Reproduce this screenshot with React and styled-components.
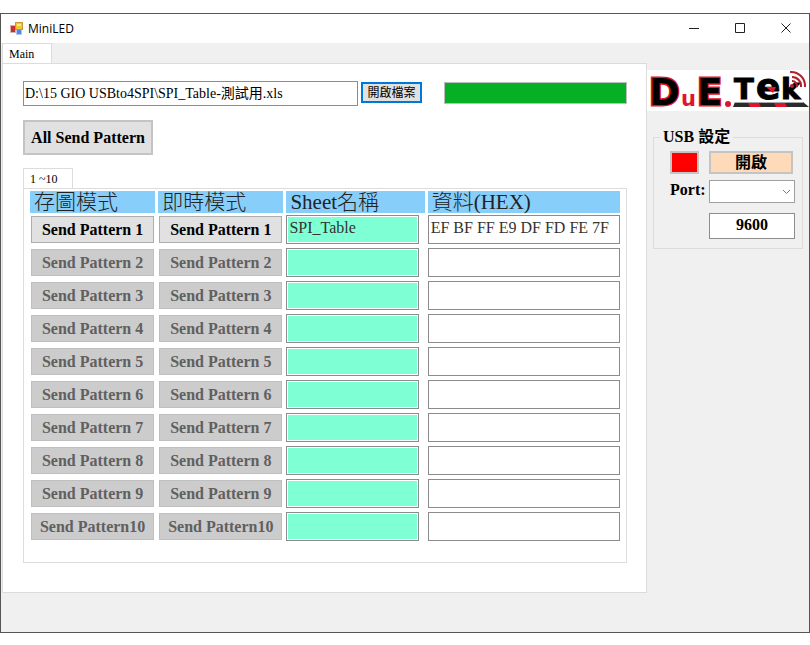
import React from "react";
import styled, { createGlobalStyle } from "styled-components";
import { useState } from "react";

const patterns = [
  { id: 1, label: "Send Pattern 1", sheet: "SPI_Table", data: "EF BF FF E9 DF FD FE 7F" },
  { id: 2, label: "Send Pattern 2", sheet: "", data: "" },
  { id: 3, label: "Send Pattern 3", sheet: "", data: "" },
  { id: 4, label: "Send Pattern 4", sheet: "", data: "" },
  { id: 5, label: "Send Pattern 5", sheet: "", data: "" },
  { id: 6, label: "Send Pattern 6", sheet: "", data: "" },
  { id: 7, label: "Send Pattern 7", sheet: "", data: "" },
  { id: 8, label: "Send Pattern 8", sheet: "", data: "" },
  { id: 9, label: "Send Pattern 9", sheet: "", data: "" },
  { id: 10, label: "Send Pattern10", sheet: "", data: "" },
];

function AppIcon() {
  return (
    <svg width="14" height="14" viewBox="0 0 14 14" aria-hidden="true">
      <rect x="0.5" y="3.5" width="5" height="7" fill="#c8312b" stroke="#d9b3b0" />
      <rect x="6.5" y="7.5" width="5" height="5" fill="#4f86e8" stroke="#b4c8ee" />
      <rect x="5.5" y="0.5" width="7" height="7" fill="#f5c52c" stroke="#c39a3a" />
      <rect x="7" y="2" width="4" height="2" fill="#fde58a" />
    </svg>
  );
}

function Logo() {
  return (
    <LogoSvg viewBox="0 0 162 41" role="img" aria-label="DuE.Tek">
      <g fontFamily="'DejaVu Sans', sans-serif" fontWeight="700">
        <g fontSize="37" stroke="#e0142c" strokeWidth="3" fill="#000" paintOrder="stroke">
          <text x="2" y="35">D</text>
          <text x="50" y="35">E</text>
        </g>
        <text x="34" y="36" fontSize="21" fill="#e0142c">u</text>
        <g fill="#000" stroke="#000">
          <text x="87" y="29" fontSize="29">T</text>
          <text x="109" y="29" fontSize="36">e</text>
          <text x="134" y="29" fontSize="29">k</text>
        </g>
      </g>
      <circle cx="81" cy="34" r="3" fill="#e0142c" />
      <path d="M119 17h10l-3 6z" fill="#e0142c" />
      <g fill="none" stroke="#b3202c" strokeWidth="2">
        <path d="M145 11a5 5 0 0 1 5 6" />
        <path d="M145 7a9 9 0 0 1 9 10" />
        <path d="M143 2a14 14 0 0 1 15 15" />
      </g>
      <circle cx="145" cy="16" r="2" fill="#b3202c" />
      <path d="M88 32h68l6 5H86z" fill="#2b2b2b" />
      <path d="M101 33h11l2 4h-11zM127 33h11l2 4h-11z" fill="#e0142c" />
      <path d="M88 32.5h68" stroke="#a8a8a8" />
    </LogoSvg>
  );
}

function App() {
  const [file, setFile] = useState("D:\\15 GIO USBto4SPI\\SPI_Table-測試用.xls");
  const [baud, setBaud] = useState("9600");

  return (
    <Window>
      <GlobalStyle />
      <TitleBar>
        <AppIcon />
        <WindowTitle>MiniLED</WindowTitle>
        <CaptionButton aria-label="Minimize">
          <svg width="11" height="11" viewBox="0 0 11 11">
            <path d="M0 5.5h10" />
          </svg>
        </CaptionButton>
        <CaptionButton aria-label="Maximize">
          <svg width="11" height="11" viewBox="0 0 11 11">
            <path d="M0.5 0.5h9v9h-9z" />
          </svg>
        </CaptionButton>
        <CaptionButton aria-label="Close">
          <svg width="11" height="11" viewBox="0 0 11 11">
            <path d="M0.5 0.5l9 9M9.5 0.5l-9 9" />
          </svg>
        </CaptionButton>
      </TitleBar>

      <Client>
        <Main>
          <Tab role="tab" aria-selected="true">Main</Tab>
          <MainPage>
            <FileRow>
              <PathInput
                aria-label="File"
                value={file}
                onChange={(e) => setFile(e.target.value)}
              />
              <OpenButton>開啟檔案</OpenButton>
              <Progress aria-label="Progress" value="100" max="100" />
            </FileRow>
            <SendAllButton>All Send Pattern</SendAllButton>

            <Tab role="tab" aria-selected="true">1 ~10</Tab>
            <PatternPage>
              <PatternTable>
                <thead>
                  <Row>
                    <HeadCell>存圖模式</HeadCell>
                    <HeadCell>即時模式</HeadCell>
                    <HeadCell>Sheet名稱</HeadCell>
                    <HeadCell>資料(HEX)</HeadCell>
                  </Row>
                </thead>
                <tbody>
                  {patterns.map((pattern) => (
                    <Row key={pattern.id}>
                      <ButtonCell>
                        <SendButton disabled={!pattern.data}>{pattern.label}</SendButton>
                      </ButtonCell>
                      <ButtonCell>
                        <SendButton disabled={!pattern.data}>{pattern.label}</SendButton>
                      </ButtonCell>
                      <SheetCell>
                        <CellInput
                          $color="#7fffd4"
                          aria-label={`Sheet名稱 ${pattern.id}`}
                          defaultValue={pattern.sheet}
                        />
                      </SheetCell>
                      <Cell>
                        <CellInput
                          $color="#ffffff"
                          aria-label={`資料(HEX) ${pattern.id}`}
                          defaultValue={pattern.data}
                        />
                      </Cell>
                    </Row>
                  ))}
                </tbody>
              </PatternTable>
            </PatternPage>
          </MainPage>
        </Main>

        <Side>
          <Logo />
          <UsbGroup>
            <legend>USB 設定</legend>
            <UsbGrid>
              <UsbButton $color="#ff0000" $width="29px" aria-label="USB status" />
              <UsbButton $color="#ffdab9" $width="84px">開啟</UsbButton>
              <PortLabel htmlFor="port">Port:</PortLabel>
              <SelectBox>
                <select id="port" />
                <svg width="9" height="6" viewBox="0 0 9 6" aria-hidden="true">
                  <path d="M1 1l3.5 3.5L8 1" fill="none" stroke="#777" />
                </svg>
              </SelectBox>
              <BaudInput
                aria-label="Baud rate"
                value={baud}
                onChange={(e) => setBaud(e.target.value)}
              />
            </UsbGrid>
          </UsbGroup>
        </Side>
      </Client>
    </Window>
  );
}

const GlobalStyle = createGlobalStyle`
  * {
    box-sizing: border-box;
  }

  body {
    margin: 0;
    padding: 13px 0 12px;
    background: #fff;
    font-family: "Liberation Serif", "Noto Sans CJK TC", serif;
    color: #000;
  }

  button, input, select {
    font-family: inherit;
    color: inherit;
    margin: 0;
    border-radius: 0;
  }
`;

const Window = styled.div`
  border: 1px solid #555;
  background: #f0f0f0;
`;

const TitleBar = styled.header`
  display: flex;
  align-items: center;
  height: 29px;
  padding-left: 9px;
  background: #fff;
`;

const WindowTitle = styled.h1`
  flex: 1;
  margin: 0 0 0 4px;
  font-family: "Open Sans", sans-serif;
  font-size: 12px;
  font-weight: 400;
`;

const CaptionButton = styled.button`
  display: flex;
  align-items: center;
  justify-content: center;
  width: 46px;
  height: 29px;
  padding: 0;
  border: none;
  background: none;

  path {
    fill: none;
    stroke: #222;
  }
`;

const Client = styled.div`
  display: flex;
  padding: 0 0 39px 1px;
`;

const Main = styled.main`
  flex: 1;
  min-width: 0;
`;

const Tab = styled.button`
  display: block;
  width: 50px;
  height: 20px;
  padding: 0 0 0 6px;
  border: 1px solid #dcdcdc;
  border-bottom: none;
  background: #fff;
  font-size: 12px;
  line-height: 18px;
  text-align: left;
`;

const MainPage = styled.section`
  padding: 17px 19px 29px 20px;
  border: 1px solid #dcdcdc;
  background: #fff;
`;

const FileRow = styled.div`
  display: flex;
  align-items: flex-start;
`;

const PathInput = styled.input`
  flex: 1;
  min-width: 0;
  height: 25px;
  padding: 0 1px 3px;
  border: 1px solid #8c8c8c;
  font-size: 14px;
`;

const OpenButton = styled.button`
  width: 61px;
  height: 21px;
  margin: 1px 22px 0 3px;
  padding: 0;
  border: 2px solid #0078d7;
  background: #e1e1e1;
  font-size: 12px;
  line-height: 16px;
`;

const Progress = styled.progress`
  appearance: none;
  width: 183px;
  height: 22px;
  margin-top: 1px;
  border: 1px solid #bcbcbc;

  &::-webkit-progress-bar {
    background: #e6e6e6;
  }

  &::-webkit-progress-value {
    background: #06b025;
  }
`;

const SendAllButton = styled.button`
  display: block;
  width: 130px;
  height: 35px;
  margin: 14px 0 13px;
  padding: 0;
  border: 2px solid #c4c4c4;
  background: #e1e1e1;
  font-size: 16px;
  font-weight: 700;
`;

const PatternPage = styled.section`
  padding: 2px 6px 21px;
  border: 1px solid #dcdcdc;
`;

const PatternTable = styled.table`
  display: block;

  thead,
  tbody {
    display: grid;
    row-gap: 4px;
  }

  thead {
    margin-bottom: 2px;
  }
`;

const Row = styled.tr`
  display: grid;
  grid-template-columns:
    minmax(0, 125fr) minmax(0, 125fr) minmax(0, 138fr)
    minmax(0, 192fr);
  column-gap: 3px;
`;

const HeadCell = styled.th`
  height: 22px;
  padding: 0 4px;
  background: #87cefa;
  color: #222;
  font-size: 21px;
  font-weight: 300;
  line-height: 22px;
  text-align: left;
  white-space: nowrap;
`;

const Cell = styled.td`
  display: flex;
  height: 29px;
  padding: 0;
`;

const ButtonCell = styled(Cell)`
  padding: 1px;
`;

const SheetCell = styled(Cell)`
  padding-right: 6px;
`;

const SendButton = styled.button`
  flex: 1;
  padding: 0;
  border: 1px solid #adadad;
  background: #e1e1e1;
  font-size: 16px;
  font-weight: 700;
  white-space: nowrap;

  &:disabled {
    border-color: #bfbfbf;
    background: #ccc;
    color: #606060;
  }
`;

const CellInput = styled.input`
  flex: 1;
  min-width: 0;
  padding: 0 2px 4px;
  border: 1px solid #8c8c8c;
  background: ${(props) => props.$color};
  color: #333;
  font-size: 16px;
  box-shadow: inset 0 0 0 1px #fff;
`;

const Side = styled.aside`
  width: 162px;
  padding-top: 27px;
`;

const LogoSvg = styled.svg`
  display: block;
  width: 100%;
  background: #fff;
  overflow: visible;
`;

const UsbGroup = styled.fieldset`
  margin: 16px 6px 0;
  padding: 4px 7px 9px 16px;
  border: 1px solid #dcdcdc;
  font-size: 16px;
  font-weight: 700;

  legend {
    margin-left: -10px;
    padding: 0 3px;
    line-height: 20px;
  }
`;

const UsbGrid = styled.div`
  display: grid;
  grid-template-columns: 39px 1fr;
  grid-template-rows: 23px 27px 26px;
  row-gap: 6px;
`;

const UsbButton = styled.button`
  width: ${(props) => props.$width};
  padding: 0;
  border: 2px solid #c4c4c4;
  background: ${(props) => props.$color};
  font-size: 16px;
  font-weight: 700;
  line-height: 18px;
`;

const PortLabel = styled.label`
  line-height: 20px;
`;

const SelectBox = styled.div`
  position: relative;
  height: 23px;

  select {
    appearance: none;
    width: 100%;
    height: 100%;
    border: 1px solid #a0a0a0;
    background: #fff;
  }

  svg {
    position: absolute;
    top: 9px;
    right: 4px;
    pointer-events: none;
  }
`;

const BaudInput = styled.input`
  grid-column: 2;
  min-width: 0;
  width: 100%;
  padding: 0 0 3px;
  border: 1px solid #8c8c8c;
  background: #fff;
  font-size: 16px;
  font-weight: 700;
  text-align: center;
`;

export default App;
